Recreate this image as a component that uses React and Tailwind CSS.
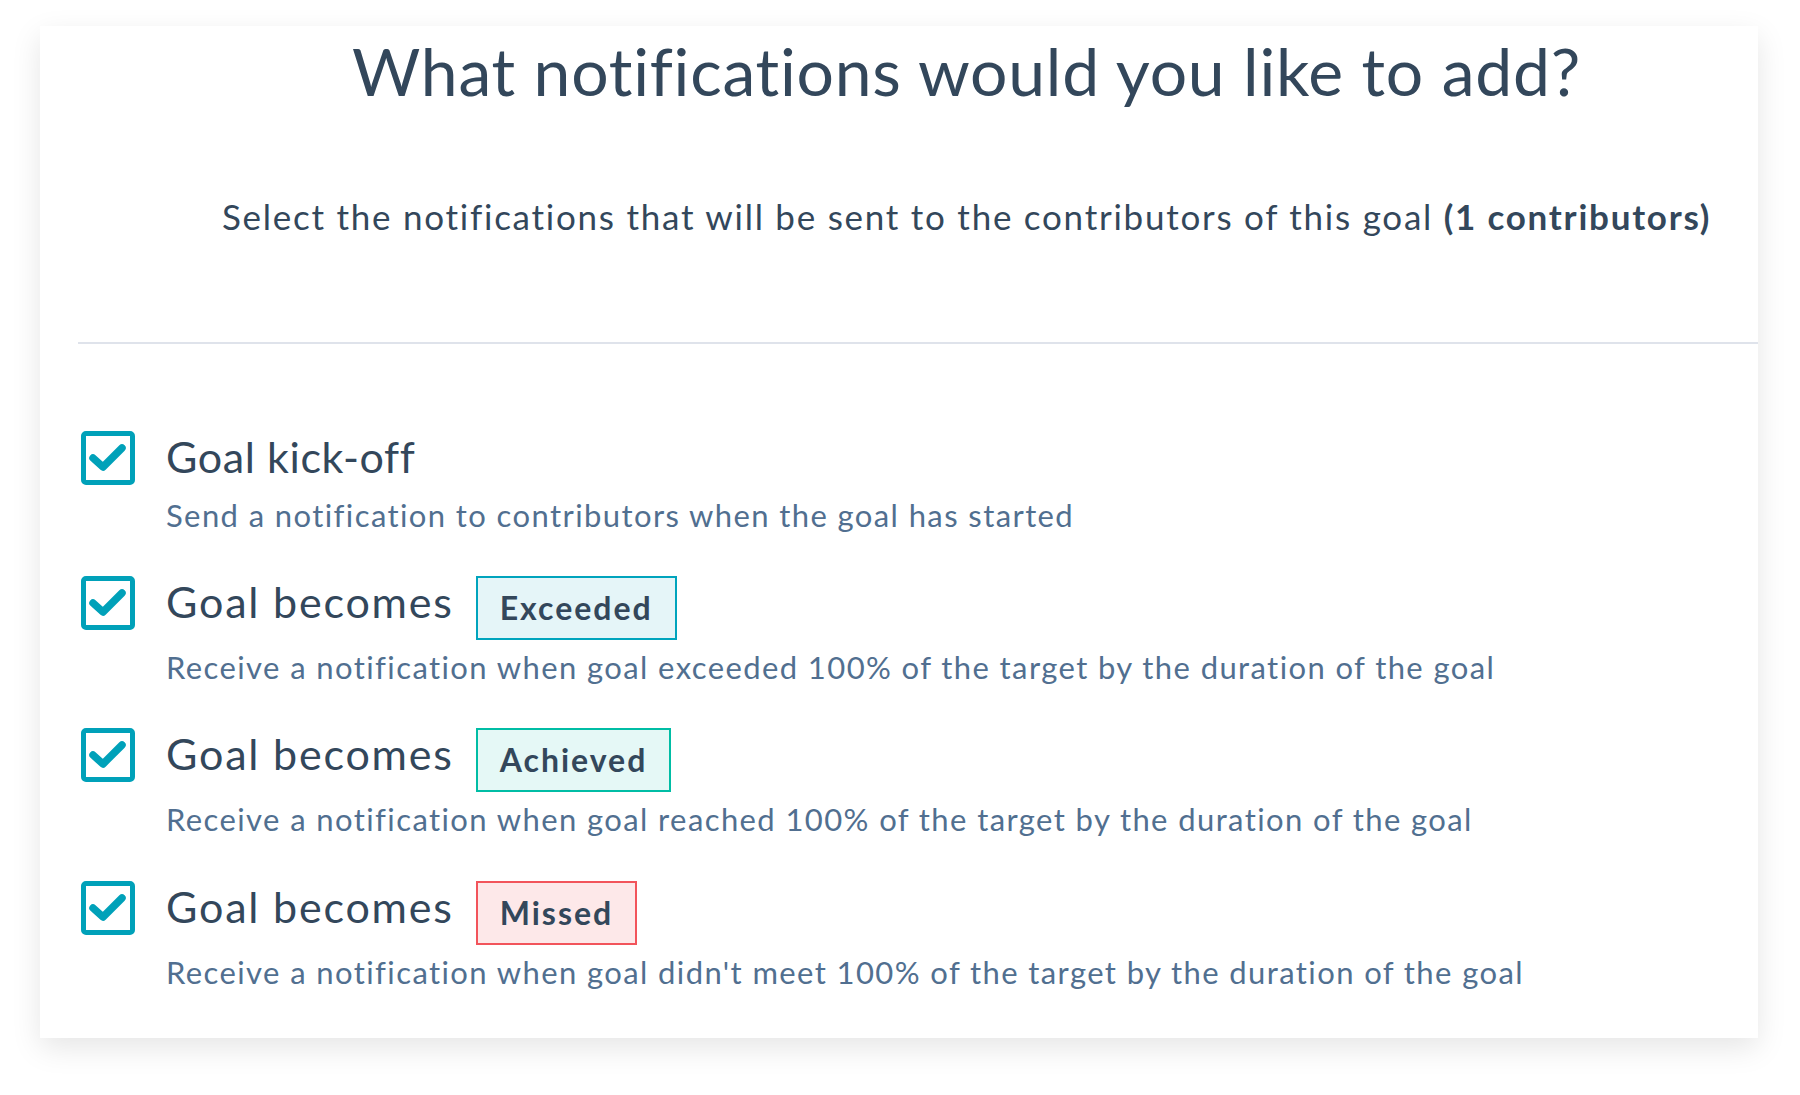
import React from 'react'

const rows = [
    {
        id: 'kickoff',
        title: 'Goal kick-off',
        titleClass: 'tracking-[0.6px]',
        desc: 'Send a notification to contributors when the goal has started',
    },
    {
        id: 'exceeded',
        title: 'Goal becomes',
        titleClass: 'tracking-[1.8px]',
        badge: { label: 'Exceeded', className: 'border-[#00a4bd] bg-[#e5f5f8]' },
        desc: 'Receive a notification when goal exceeded 100% of the target by the duration of the goal',
    },
    {
        id: 'achieved',
        title: 'Goal becomes',
        titleClass: 'tracking-[1.8px]',
        badge: { label: 'Achieved', className: 'border-[#00bda5] bg-[#e5f8f6]' },
        desc: 'Receive a notification when goal reached 100% of the target by the duration of the goal',
    },
    {
        id: 'missed',
        title: 'Goal becomes',
        titleClass: 'tracking-[1.8px]',
        badge: { label: 'Missed', className: 'border-[#f2545b] bg-[#fde8e9]' },
        desc: "Receive a notification when goal didn't meet 100% of the target by the duration of the goal",
    },
]

const CheckBox = () => (
    <div className="w-[54px] h-[54px] shrink-0 rounded-[5px] border-[5px] border-[#00a1b9] bg-white flex items-center justify-center">
        <svg width="44" height="44" viewBox="0 0 44 44" fill="none">
            <path d="M7 22 L17 31 L36 12" stroke="#00a1b9" strokeWidth="7.5" strokeLinecap="round" strokeLinejoin="round" />
        </svg>
    </div>
)

const App = () => {
    return (
        <div className="w-[1800px] h-[1095px] bg-white pt-[26px] pl-[40px] font-['Lato','Liberation_Sans',sans-serif]">
            <div className="w-[1718px] h-[1012px] bg-white shadow-[0_10px_28px_rgba(0,0,0,0.10)] flex flex-col">
                {/* header */}
                <div className="ml-[135px] pt-[12px] text-center text-[#33475b]">
                    <h1 className="text-[66px] leading-none font-normal tracking-[0.75px]">What notifications would you like to add?</h1>
                    <p className="mt-[95px] text-[35px] leading-none tracking-[1.75px]">
                        Select the notifications that will be sent to the contributors of this goal <span className="font-bold">(1 contributors)</span>
                    </p>
                </div>

                <div className="mt-[108px] ml-[38px] h-[2px] bg-[#dfe3eb]"></div>

                {/* notification list */}
                <div className="pt-[87px] pl-[41px] flex flex-col gap-[42px]">
                    {rows.map((row) => (
                        <div key={row.id} className="flex items-start">
                            <CheckBox />
                            <div className="ml-[31px]">
                                <div className="flex items-start gap-[22px] min-h-[57px]">
                                    <span className={`text-[43px] leading-[1.2] text-[#33475b] ${row.titleClass}`}>{row.title}</span>
                                    {row.badge && (
                                        <span className={`h-[64px] px-[22px] border-2 flex items-center text-[32px] font-bold tracking-[2px] text-[#33475b] ${row.badge.className}`}>
                                            {row.badge.label}
                                        </span>
                                    )}
                                </div>
                                <p className="mt-[9px] text-[31px] leading-[1.2] tracking-[1.4px] text-[#516f90]">{row.desc}</p>
                            </div>
                        </div>
                    ))}
                </div>
            </div>
        </div>
    )
}

export default App
